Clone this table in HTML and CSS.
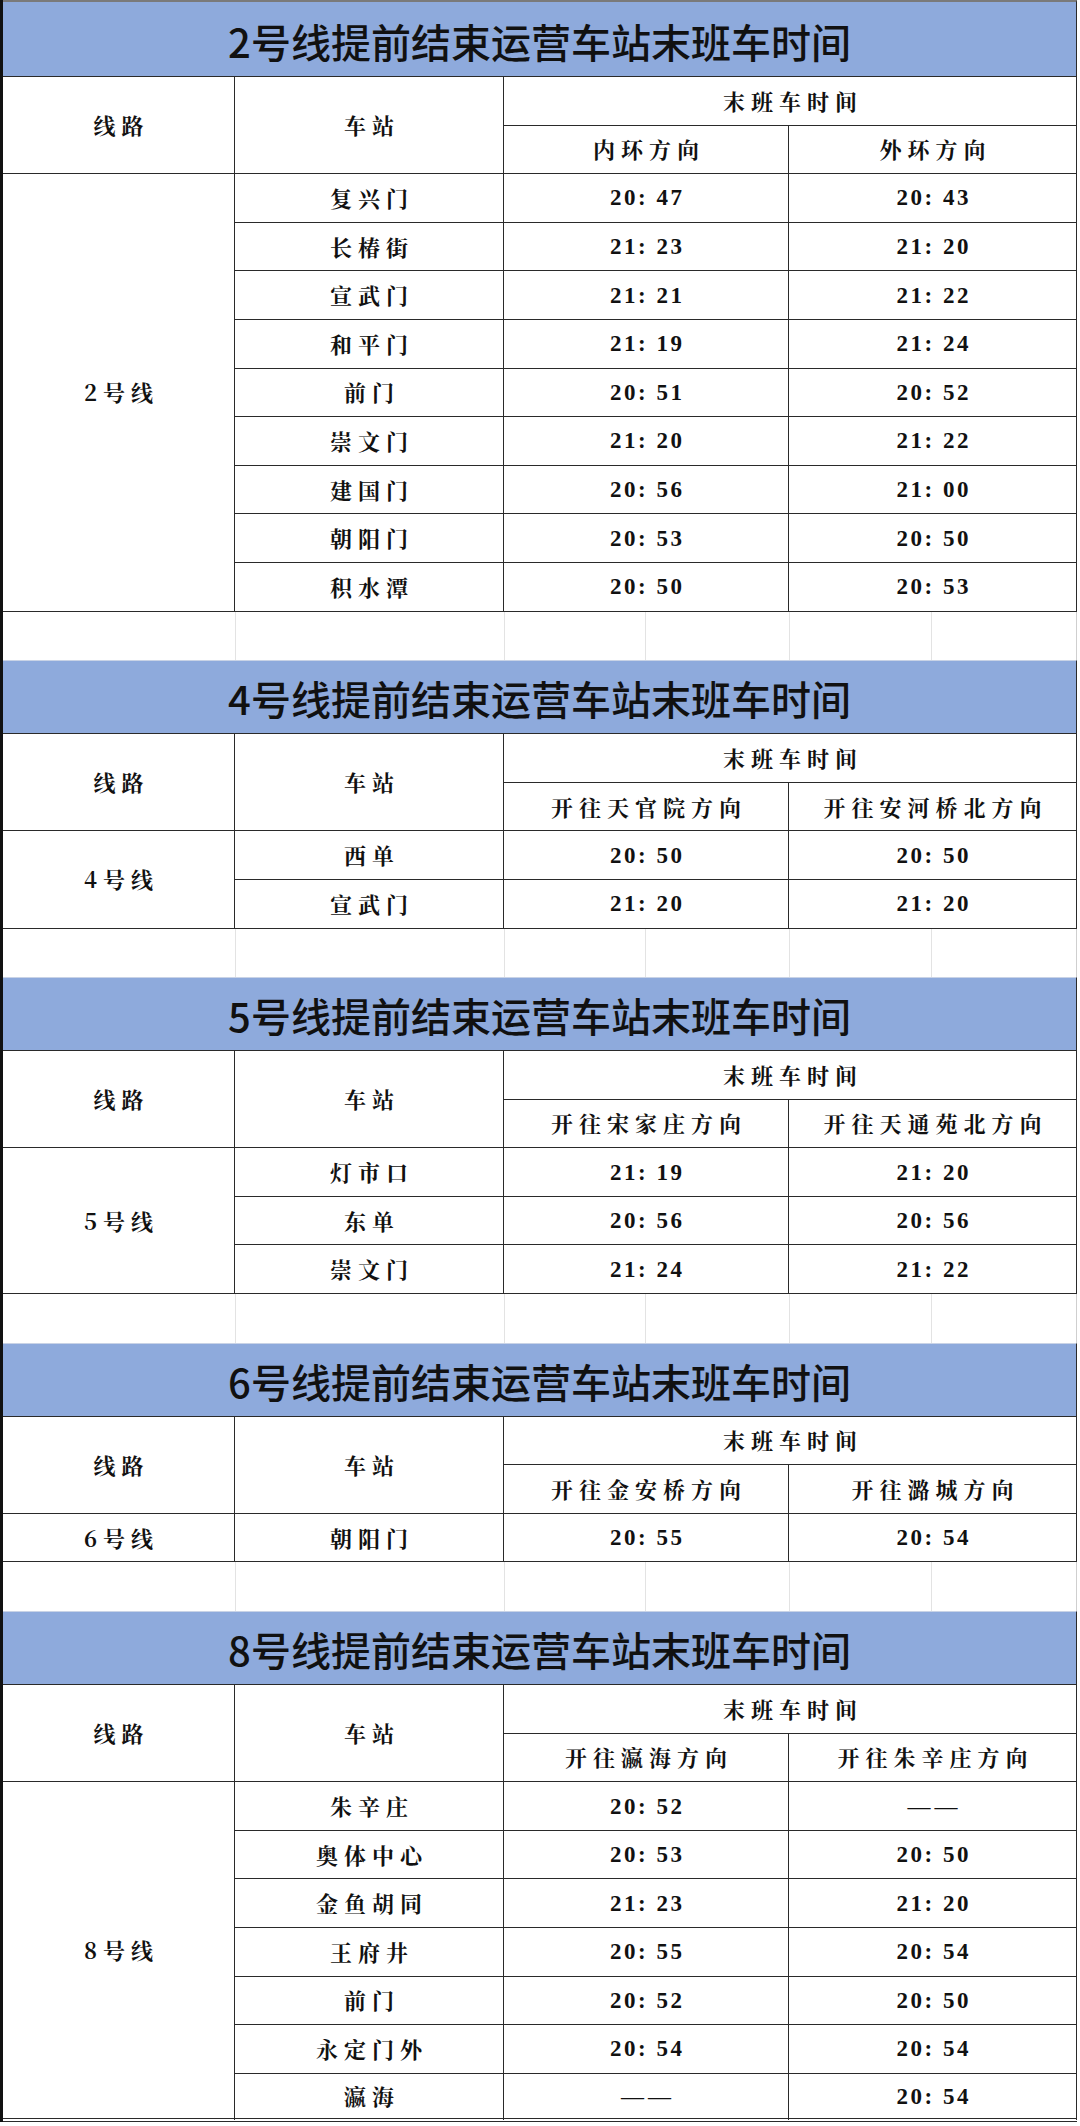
FILE: index.html
```html
<!DOCTYPE html>
<html lang="zh-CN">
<head>
<meta charset="utf-8">
<title>提前结束运营车站末班车时间</title>
<link rel="stylesheet" href="styles.css">
</head>
<body>
<div class="sheet">

  <section class="tt first">
    <div class="title">2号线提前结束运营车站末班车时间</div>
    <div class="c cj span-r2">线路</div><div class="c cj span-r2">车站</div><div class="c cj span-c2">末班车时间</div>
    <div class="c cj">内环方向</div><div class="c cj">外环方向</div>
    <div class="c cj ln r9">2号线</div>
    <div class="c cj">复兴门</div><div class="c t">20: 47</div><div class="c t">20: 43</div>
    <div class="c cj">长椿街</div><div class="c t">21: 23</div><div class="c t">21: 20</div>
    <div class="c cj">宣武门</div><div class="c t">21: 21</div><div class="c t">21: 22</div>
    <div class="c cj">和平门</div><div class="c t">21: 19</div><div class="c t">21: 24</div>
    <div class="c cj">前门</div><div class="c t">20: 51</div><div class="c t">20: 52</div>
    <div class="c cj">崇文门</div><div class="c t">21: 20</div><div class="c t">21: 22</div>
    <div class="c cj">建国门</div><div class="c t">20: 56</div><div class="c t">21: 00</div>
    <div class="c cj">朝阳门</div><div class="c t">20: 53</div><div class="c t">20: 50</div>
    <div class="c cj">积水潭</div><div class="c t">20: 50</div><div class="c t">20: 53</div>
  </section>
  <div class="gap"><span></span><span></span><span></span><span></span><span></span><span></span></div>

  <section class="tt">
    <div class="title">4号线提前结束运营车站末班车时间</div>
    <div class="c cj span-r2">线路</div><div class="c cj span-r2">车站</div><div class="c cj span-c2">末班车时间</div>
    <div class="c cj">开往天官院方向</div><div class="c cj">开往安河桥北方向</div>
    <div class="c cj ln r2">4号线</div>
    <div class="c cj">西单</div><div class="c t">20: 50</div><div class="c t">20: 50</div>
    <div class="c cj">宣武门</div><div class="c t">21: 20</div><div class="c t">21: 20</div>
  </section>
  <div class="gap"><span></span><span></span><span></span><span></span><span></span><span></span></div>

  <section class="tt">
    <div class="title">5号线提前结束运营车站末班车时间</div>
    <div class="c cj span-r2">线路</div><div class="c cj span-r2">车站</div><div class="c cj span-c2">末班车时间</div>
    <div class="c cj">开往宋家庄方向</div><div class="c cj">开往天通苑北方向</div>
    <div class="c cj ln r3">5号线</div>
    <div class="c cj">灯市口</div><div class="c t">21: 19</div><div class="c t">21: 20</div>
    <div class="c cj">东单</div><div class="c t">20: 56</div><div class="c t">20: 56</div>
    <div class="c cj">崇文门</div><div class="c t">21: 24</div><div class="c t">21: 22</div>
  </section>
  <div class="gap"><span></span><span></span><span></span><span></span><span></span><span></span></div>

  <section class="tt">
    <div class="title">6号线提前结束运营车站末班车时间</div>
    <div class="c cj span-r2">线路</div><div class="c cj span-r2">车站</div><div class="c cj span-c2">末班车时间</div>
    <div class="c cj">开往金安桥方向</div><div class="c cj">开往潞城方向</div>
    <div class="c cj ln">6号线</div>
    <div class="c cj">朝阳门</div><div class="c t">20: 55</div><div class="c t">20: 54</div>
  </section>
  <div class="gap"><span></span><span></span><span></span><span></span><span></span><span></span></div>

  <section class="tt last">
    <div class="title">8号线提前结束运营车站末班车时间</div>
    <div class="c cj span-r2">线路</div><div class="c cj span-r2">车站</div><div class="c cj span-c2">末班车时间</div>
    <div class="c cj">开往瀛海方向</div><div class="c cj">开往朱辛庄方向</div>
    <div class="c cj ln r7">8号线</div>
    <div class="c cj">朱辛庄</div><div class="c t">20: 52</div><div class="c t dash">——</div>
    <div class="c cj">奥体中心</div><div class="c t">20: 53</div><div class="c t">20: 50</div>
    <div class="c cj">金鱼胡同</div><div class="c t">21: 23</div><div class="c t">21: 20</div>
    <div class="c cj">王府井</div><div class="c t">20: 55</div><div class="c t">20: 54</div>
    <div class="c cj">前门</div><div class="c t">20: 52</div><div class="c t">20: 50</div>
    <div class="c cj">永定门外</div><div class="c t">20: 54</div><div class="c t">20: 54</div>
    <div class="c cj">瀛海</div><div class="c t dash">——</div><div class="c t">20: 54</div>
  </section>

</div>
</body>
</html>
```

FILE: styles.css
```css
html, body {
  margin: 0;
  padding: 0;
  background: #ffffff;
}

.sheet {
  width: 1077px;
  border-left: 3px solid #111111;
  color: #111111;
}

.tt {
  display: grid;
  grid-template-columns: 232px 269px 285px 288px;
  grid-template-rows: 74px;
  grid-auto-rows: 48.6px;
  width: 1074px;
}

.first {
  grid-template-rows: 77px;
}

.title {
  grid-column: 1 / -1;
  display: flex;
  align-items: center;
  justify-content: center;
  box-sizing: border-box;
  background: #8eaadc;
  font-family: "Noto Sans CJK SC", "Noto Sans", sans-serif;
  font-size: 40px;
  font-weight: 500;
  color: #111111;
  border-top: 1px solid #c9d3e6;
  border-right: 1.5px solid #2a2a2a;
  border-bottom: 1.5px solid #2a2a2a;
  padding-top: 2px;
}

.first .title {
  border-top: 2px solid #7a7a7a;
  padding-top: 4px;
}

.c {
  display: flex;
  align-items: center;
  justify-content: center;
  box-sizing: border-box;
  border-right: 1.5px solid #2a2a2a;
  border-bottom: 1.5px solid #2a2a2a;
  white-space: nowrap;
}

.span-r2 { grid-row: span 2; }
.span-c2 { grid-column: span 2; }

.ln { grid-column: 1; }
.r2 { grid-row: span 2; }
.r3 { grid-row: span 3; }
.r7 { grid-row: span 7; }
.r9 { grid-row: span 9; }

.cj {
  font-family: "Noto Serif CJK SC", "Noto Sans CJK SC", serif;
  font-size: 22px;
  font-weight: 700;
  letter-spacing: 6px;
  padding-left: 6px;
  line-height: 1;
}

.t {
  font-family: "Liberation Serif", "Times New Roman", serif;
  font-size: 23px;
  font-weight: 700;
  letter-spacing: 2.5px;
  padding-left: 2.5px;
  line-height: 1;
}

.dash {
  font-weight: 400;
  letter-spacing: 4px;
  padding-left: 4px;
}

.last .c:nth-last-child(-n+3),
.last .ln {
  border-bottom: 4px double #2a2a2a;
}

.gap {
  display: grid;
  grid-template-columns: 233px 269px 141px 144px 142px 145px;
  height: 48.6px;
  width: 1074px;
}

.gap span {
  border-right: 1px solid #e3e3e3;
}

.gap span:last-child {
  border-right: 1.5px solid #cfcfcf;
}
```
